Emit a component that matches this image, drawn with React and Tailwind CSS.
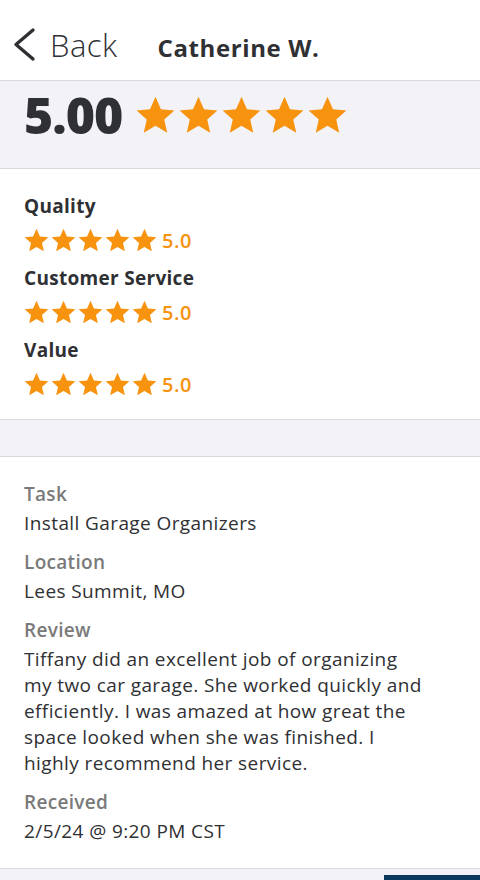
function Star({ size }) {
  return (
    <svg width={size} height={size} viewBox="0 0 24 24" className="shrink-0">
      <path
        fill="#f7930f"
        d="M12 1.6l3.05 6.9 7.5.72-5.67 4.98 1.66 7.36L12 17.74l-6.54 3.82 1.66-7.36L1.45 9.22l7.5-.72z"
      />
    </svg>
  );
}

function SubRating({ label }) {
  return (
    <div>
      <div className="text-[19px] font-bold leading-[26px] tracking-[0.3px] text-[#2f3033]">{label}</div>
      <div className="ml-[-1px] mt-[8px] flex items-center">
        {[0, 1, 2, 3, 4].map((i) => (
          <Star key={i} size={27} />
        ))}
        <span className="ml-[4px] text-[20px] font-semibold leading-none tracking-[0.6px] text-[#f7930f]">5.0</span>
      </div>
    </div>
  );
}

function Field({ label, children }) {
  return (
    <div>
      <div className="text-[19px] font-semibold leading-[26px] tracking-[0.3px] text-[#7a7a7a]">{label}</div>
      <div className="mt-[3px] text-[19px] leading-[26px] tracking-[0.4px] text-[#2f3033]">{children}</div>
    </div>
  );
}

export default function App() {
  return (
    <div className="flex h-[880px] w-[480px] flex-col overflow-hidden bg-[#f2f2f7] font-['Open_Sans',sans-serif]">
      <div className="flex h-[81px] shrink-0 items-center border-b border-[#d9d9dd] bg-white pt-[10px]">
        <svg width="30" height="44" viewBox="0 0 30 44" className="ml-[10px] shrink-0">
          <path d="M23 7L6 21.5 23 36" fill="none" stroke="#2f3033" strokeWidth="3.4" strokeLinecap="round" strokeLinejoin="round" />
        </svg>
        <span className="ml-[10px] text-[31px] font-light leading-none tracking-[0.5px] text-[#2f3033]">Back</span>
        <span className="ml-[40px] mt-[6px] text-[24px] font-bold leading-none tracking-[0.6px] text-[#2f3033]">Catherine W.</span>
      </div>

      <div className="flex h-[88px] shrink-0 items-start border-b border-[#d9d9dd] px-[24px] pt-[8px]">
        <span className="text-[50px] font-extrabold leading-[52px] tracking-[-1px] text-[#2f3033]">5.00</span>
        <div className="ml-[12px] mt-[5px] flex">
          {[0, 1, 2, 3, 4].map((i) => (
            <Star key={i} size={43} />
          ))}
        </div>
      </div>

      <div className="flex h-[251px] shrink-0 flex-col gap-[11px] border-b border-[#d9d9dd] bg-white px-[24px] pt-[24px]">
        <SubRating label="Quality" />
        <SubRating label="Customer Service" />
        <SubRating label="Value" />
      </div>

      <div className="h-[37px] shrink-0 border-b border-[#d9d9dd]" />

      <div className="flex h-[412px] shrink-0 flex-col gap-[13px] border-b border-[#d9d9dd] bg-white px-[24px] pt-[24px]">
        <Field label="Task">Install Garage Organizers</Field>
        <Field label="Location">Lees Summit, MO</Field>
        <Field label="Review">
          <p className="w-[404px]">
            Tiffany did an excellent job of organizing my two car garage. She worked quickly and efficiently. I was amazed at how great the space looked when she was finished. I highly recommend her service.
          </p>
        </Field>
        <Field label="Received">2/5/24 @ 9:20 PM CST</Field>
      </div>

      <div className="flex flex-1 justify-end pt-[6px]">
        <div className="h-[10px] w-[96px] bg-[#0c3a5e]" />
      </div>
    </div>
  );
}
